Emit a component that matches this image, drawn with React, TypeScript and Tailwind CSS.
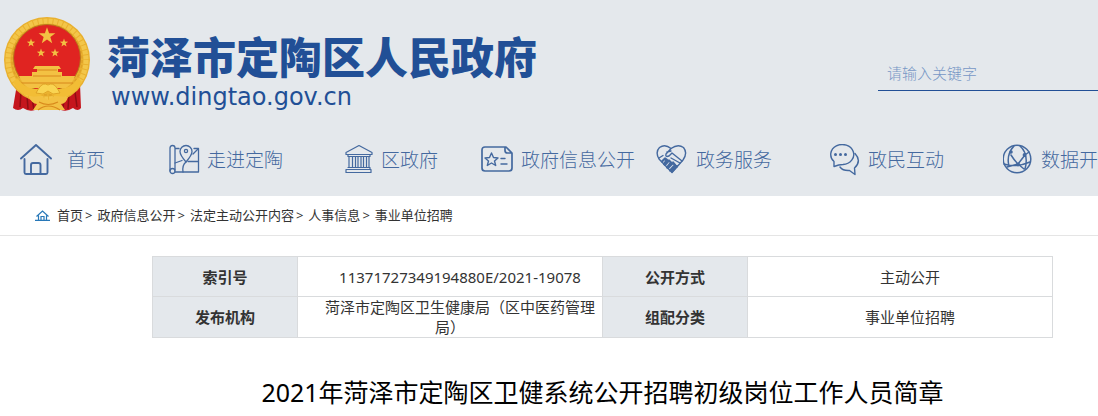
import type { ReactNode } from "react";

function Emblem() {
  const star = "M0-10L2.4-3.2 9.5-3.1 3.8 1.2 5.9 8.1 0 4 -5.9 8.1 -3.8 1.2 -9.5-3.1 -2.4-3.2Z";
  return (
    <svg viewBox="0 0 90 96" className="w-[90px] h-24 shrink-0" aria-hidden="true">
      <path d="M14 68L10 92Q15 96 20 92Q26 96 32 94L58 94Q64 96 70 92Q75 96 78 92L77 68Z" fill="#c5161d" />
      <path d="M18 76L17 91M24 79L25 93M66 79L65 93M72 76L74 91M29 82L31 94M61 82L60 94" stroke="#8f0d12" strokeWidth="1.5" />
      <circle cx="44" cy="44" r="43" fill="#e9b02f" />
      <circle cx="44" cy="44" r="39" fill="none" stroke="#f3c649" strokeWidth="5" strokeDasharray="4 1" />
      <circle cx="44" cy="44" r="35" fill="none" stroke="#dfa127" strokeWidth="1.5" strokeDasharray="3 2" />
      <circle cx="44" cy="42" r="33.5" fill="#e02421" stroke="#b9781a" strokeWidth="1" />
      <g fill="#f3c143">
        <path d={star} transform="translate(44 20) scale(.88)" />
        <path d={star} transform="translate(28 27) scale(.44)" />
        <path d={star} transform="translate(61 27) scale(.44)" />
        <path d={star} transform="translate(38 37) scale(.44)" />
        <path d={star} transform="translate(52 37) scale(.44)" />
        <path d="M32 50H56L58 53H55V56H59V60H72Q70 67 63 72H25Q18 66 16 60H29V56H34V53H30Z" />
      </g>
      <path d="M34 54H54M30 60H58M18 67H70" stroke="#d8871c" strokeWidth="1" />
      <path d="M14 62Q24 76 38 72L44 68 50 72Q66 76 75 62L79 66Q70 83 53 81L45 76 36 81Q18 82 10 66Z" fill="#f2bd35" />
      <path d="M36 72Q40 66 45 69Q50 66 54 72L57 77 50 78 45 75 40 78 33 77Z" fill="#f9d452" stroke="#d99a1f" strokeWidth=".8" />
      <path d="M26 81L38 80 45 84 52 80 65 81Q63 88 58 88L62 94H30L34 88Q29 88 26 81Z" fill="#f3c143" />
      <path d="M36 86Q45 91 55 86M35 94Q45 86 57 94" fill="none" stroke="#d98a1c" strokeWidth="1.2" />
    </svg>
  );
}

function NavIcon({ children }: { children: ReactNode }) {
  return (
    <svg
      viewBox="0 0 32 32"
      className="w-8 h-8 shrink-0"
      fill="none"
      stroke="currentColor"
      strokeWidth="1.5"
      strokeLinecap="round"
      strokeLinejoin="round"
      aria-hidden="true"
    >
      {children}
    </svg>
  );
}

const homeIcon = (
  <g strokeWidth="1.9">
    <path d="M1 14.500L16 1 31 14.500M4.500 15V28.500Q4.500 30 6 30H26Q27.500 30 27.500 28.500V15" />
    <path d="M11 29.500V21Q11 19 13 19H18.500Q20.500 19 20.500 21V29.500" />
  </g>
);

const mapIcon = (
  <g strokeWidth="1.300">
    <path d="M1 27V4Q1 1.500 3.500 1.500T6 4V26M6 4.500H10M25 4.500H29.500V28H6" />
    <circle cx="3.500" cy="27" r="2.500" />
    <path d="M17 18Q11 11 11 7.500A6 6 0 0 1 23 7.500Q23 11 17 18Z" />
    <circle cx="17" cy="7" r="1.600" />
    <path d="M6 19L13 16.500M19 17.500L29 17.500M17 18Q13 21 14 28M24 10L28.500 5.500" />
  </g>
);

const bankIcon = (
  <g strokeWidth="1.200">
    <path d="M14 1.500L27 8.500V10.500H1V8.500ZM3 10.500V12.500H25V10.500M2 25.500H26V28.500H1V25.500ZM3 23.500H25V25.500" />
    <path d="M4 12.500V23.500M7.500 12.500V23.500M10.500 12.500V23.500M13 12.500V23.500M16 12.500V23.500M18.500 12.500V23.500M21.500 12.500V23.500M24 12.500V23.500" />
  </g>
);

const docIcon = (
  <g strokeWidth="1.700">
    <path d="M25 3H4Q1 3 1 6V24Q1 27 4 27H28Q31 27 31 24V9ZM24 3V6.500Q24 9 26.500 9H31" />
    <path d="M10.500 9L12.500 13.500 17 14 13.500 17 14.700 21.500 10.500 19 6.300 21.500 7.500 17 4 14 8.500 13.500Z" strokeWidth="1.400" />
    <path d="M20 14.500H24M20 20H26" strokeWidth="1.400" />
  </g>
);

const heartIcon = (
  <g strokeWidth="1.400">
    <path d="M16 28.500L3 15Q-1 8 3.500 3.500Q9-.5 15 4.500Q22-.5 27.500 3.500Q32 9 27 16L16 28.500Z" />
    <path d="M15 4.500L10 10Q9 13.500 13 12L16 9 26 17M3 14L7 11.500M11 8L15 7" />
    <path d="M6 17.500L9 14.500 11 16 8 20M9 21L13 16.500 15 18.500 11 23.500M12 24L17 19 19 21 14 26.500M16 27.500L21 22" strokeWidth="2.200" />
    <path d="M15 14L24 19M17 18L21 23" />
  </g>
);

const chatIcon = (
  <g strokeWidth="1.400">
    <path d="M6 22.500V17.500A11.500 10 0 1 1 15 20.500Q11 20.500 6 22.500Z" />
    <path d="M27 9.500Q34 17 26.500 24L27 30.500 21.500 26.500Q15 27 12 23" />
    <g fill="currentColor" stroke="none">
      <circle cx="7.500" cy="10.500" r="1.500" />
      <circle cx="12.500" cy="10.500" r="1.500" />
      <circle cx="17.500" cy="10.500" r="1.500" />
    </g>
  </g>
);

const dataIcon = (
  <g strokeWidth="1.500">
    <circle cx="14" cy="15" r="13.800" />
    <path d="M11 2Q3 11 6 22M11 2Q7 6 7 9M8 11Q11 16 15 20M17 2Q26 10 22 25M22 11L15 20M1 20Q13 24 27 18M22 11L26 8M15 20L4 23M15 20L21 25" />
    <g fill="currentColor" stroke="none">
      <circle cx="8" cy="8" r="1.800" />
      <circle cx="21.500" cy="11" r="1.900" />
      <circle cx="15" cy="20.500" r="2" />
    </g>
  </g>
);

const navItems = [
  { label: "首页", icon: homeIcon, gap: "gap-[15px]" },
  { label: "走进定陶", icon: mapIcon, gap: "gap-1.5" },
  { label: "区政府", icon: bankIcon, gap: "gap-1" },
  { label: "政府信息公开", icon: docIcon, gap: "gap-2" },
  { label: "政务服务", icon: heartIcon, gap: "gap-2" },
  { label: "政民互动", icon: chatIcon, gap: "gap-2" },
  { label: "数据开放", icon: dataIcon, gap: "gap-1.5" },
];

const crumbs = ["首页", "政府信息公开", "法定主动公开内容", "人事信息", "事业单位招聘"];

const rows = [
  ["索引号", "11371727349194880E/2021-19078", "公开方式", "主动公开"],
  ["发布机构", "菏泽市定陶区卫生健康局（区中医药管理局）", "组配分类", "事业单位招聘"],
];

function Header() {
  return (
    <header className="bg-[#e4e8ec] pt-4 pb-5 overflow-hidden">
      <div className="flex justify-between">
        <a href="#" className="flex pl-[3px]">
          <Emblem />
          <div className="pl-3.5 pt-4.5 text-[#214f96]">
            <h1 className="text-[43px] leading-12 font-black whitespace-nowrap">菏泽市定陶区人民政府</h1>
            <p className="pl-1 font-['DejaVu_Sans',sans-serif] text-2xl leading-[30px]">www.dingtao.gov.cn</p>
          </div>
        </a>
        <form className="w-[220px] pt-10">
          <input
            type="text"
            aria-label="请输入关键字"
            placeholder="请输入关键字"
            className="block w-full h-[35px] px-[9px] border-b border-[#214f96] bg-transparent text-[15px] font-light placeholder:text-[#7797c5] outline-none"
          />
        </form>
      </div>
      <nav className="pt-8 pl-5">
        <ul className="grid grid-cols-[149px_176px_136px_175px_172px_175px_150px]">
          {navItems.map((item) => (
            <li key={item.label}>
              <a href="#" className={`flex items-center ${item.gap} text-[#44699f]`}>
                <NavIcon>{item.icon}</NavIcon>
                <span className="text-[19px] leading-8 font-light whitespace-nowrap">{item.label}</span>
              </a>
            </li>
          ))}
        </ul>
      </nav>
    </header>
  );
}

function Breadcrumb() {
  return (
    <nav className="flex items-center h-10 pl-[35px] border-b border-[#e5e5e5] text-[13px] text-[#333]">
      <svg viewBox="0 0 15 11" className="w-[15px] h-[11px] mr-[7px]" fill="none" stroke="#2878b8" strokeWidth="1.2" aria-hidden="true">
        <path d="M0 10.300H15M1.500 6.500L7.500 1 13.500 6.500M3.500 5.500V10M11.500 5.500V10M6 10V6.500H9V10" />
      </svg>
      <ol className="flex gap-[5px]">
        {crumbs.map((crumb, i) => (
          <li key={crumb} className="flex gap-0.5">
            <a href="#">{crumb}</a>
            {i < crumbs.length - 1 && <span>&gt;</span>}
          </li>
        ))}
      </ol>
    </nav>
  );
}

export default function App() {
  return (
    <div className="min-h-screen bg-white overflow-hidden font-['Noto_Sans','Noto_Sans_CJK_SC',sans-serif]">
      <Header />
      <Breadcrumb />
      <main className="pt-5 pl-[152px] pr-[45px]">
        <table className="w-full table-fixed border-collapse text-center text-[15px] leading-5 text-[#333]">
          <colgroup>
            <col className="w-[145px]" />
            <col />
            <col className="w-[145px]" />
            <col />
          </colgroup>
          <tbody>
            {rows.map(([name, value, name2, value2]) => (
              <tr key={name} className="h-10">
                <th scope="row" className="border border-[#d9dbdd] bg-[#e4e8ec] font-bold">{name}</th>
                <td className="border border-[#d9dbdd] indent-5">{value}</td>
                <th scope="row" className="border border-[#d9dbdd] bg-[#e4e8ec] font-bold">{name2}</th>
                <td className="border border-[#d9dbdd] indent-5">{value2}</td>
              </tr>
            ))}
          </tbody>
        </table>
        <h2 className="pt-9 text-center text-[25px] leading-9 text-black whitespace-nowrap">
          2021年菏泽市定陶区卫健系统公开招聘初级岗位工作人员简章
        </h2>
      </main>
    </div>
  );
}
